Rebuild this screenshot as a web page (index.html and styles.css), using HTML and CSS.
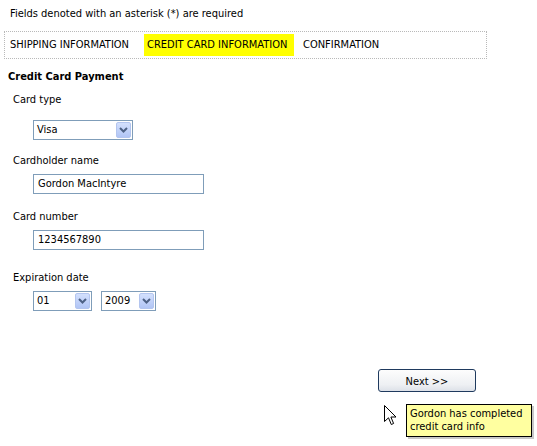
FILE: index.html
```html
<!DOCTYPE html>
<html>
<head>
<meta charset="utf-8">
<link rel="stylesheet" href="styles.css">
</head>
<body>
<p class="required">Fields denoted with an asterisk (*) are required</p>
<nav class="steps">
  <span class="step">SHIPPING INFORMATION</span>
  <span class="step current">CREDIT CARD INFORMATION</span>
  <span class="step">CONFIRMATION</span>
</nav>
<h2 class="section-title">Credit Card Payment</h2>
<div class="form">
  <div class="label label-first">Card type</div>
  <div class="control-row row-cardtype">
    <div class="select select-card"><span class="select-value">Visa</span><span class="select-btn"><svg width="9" height="6" viewBox="0 0 9 6"><path d="M1 1 L4.5 4.5 L8 1" fill="none" stroke="#4d6185" stroke-width="2"/></svg></span></div>
  </div>
  <div class="label label-gap">Cardholder name</div>
  <div class="control-row">
    <div class="input input-wide">Gordon MacIntyre</div>
  </div>
  <div class="label label-gap2">Card number</div>
  <div class="control-row">
    <div class="input input-wide">1234567890</div>
  </div>
  <div class="label label-gap3">Expiration date</div>
  <div class="control-row date-row">
    <div class="select select-month"><span class="select-value">01</span><span class="select-btn"><svg width="9" height="6" viewBox="0 0 9 6"><path d="M1 1 L4.5 4.5 L8 1" fill="none" stroke="#4d6185" stroke-width="2"/></svg></span></div>
    <div class="select select-year"><span class="select-value">2009</span><span class="select-btn"><svg width="9" height="6" viewBox="0 0 9 6"><path d="M1 1 L4.5 4.5 L8 1" fill="none" stroke="#4d6185" stroke-width="2"/></svg></span></div>
  </div>
</div>
<div class="actions">
  <button class="next-btn" type="button">Next &gt;&gt;</button>
  <svg class="cursor" width="13" height="22" viewBox="0 0 13 22"><path d="M0.5 0.5 L0.5 16.5 L4.5 12.8 L7.3 19.5 L9.6 18.5 L6.9 12 L12 12 Z" fill="#fff" stroke="#000" stroke-width="1" stroke-linejoin="miter"/></svg>
  <div class="tooltip">Gordon has completed<br>credit card info</div>
</div>
</body>
</html>
```
FILE: styles.css
```css
html, body {
  margin: 0;
  padding: 0;
  background: #fff;
}
body {
  font-family: "DejaVu Sans Condensed", "DejaVu Sans", sans-serif;
  font-size: 11px;
  color: #000;
  position: relative;
  width: 537px;
  height: 446px;
  overflow: hidden;
}
.required {
  margin: 0;
  padding: 7px 0 0 10px;
  line-height: 14px;
}
.steps {
  display: flex;
  margin: 10px 0 0 4px;
  width: 476px;
  border: 1px dotted #b9b9b9;
  padding: 2px 0 2px 5px;
}
.step {
  line-height: 22px;
}
.step.current {
  background: #ffff00;
  width: 150px;
  box-sizing: border-box;
  padding: 0 3px;
  margin: 0 9px 0 15px;
}
.section-title {
  margin: 11px 0 0 8px;
  font-size: 11px;
  font-weight: bold;
  line-height: 14px;
}
.form {
  padding-left: 13px;
}
.label {
  line-height: 14px;
}
.label-first { margin-top: 9px; }
.label-gap { margin-top: 14px; }
.label-gap2 { margin-top: 16px; }
.label-gap3 { margin-top: 21px; }
.control-row {
  display: flex;
  gap: 9px;
  padding-left: 20px;
  margin-top: 6px;
}
.row-cardtype { margin-top: 13px; }
.select {
  box-sizing: border-box;
  height: 20px;
  border: 1px solid #7f9db9;
  display: flex;
  align-items: center;
  justify-content: space-between;
  padding: 1px 1px 1px 3px;
  background: #fff;
}
.select-card { width: 100px; }
.select-month { width: 59px; }
.select-year { width: 55px; }
.select-value {
  line-height: 16px;
}
.select-btn {
  width: 15px;
  height: 16px;
  box-sizing: border-box;
  border: 1px solid #b3c5ef;
  border-radius: 2px;
  background: linear-gradient(#d3e0fd, #b1c5f5);
  display: flex;
  align-items: center;
  justify-content: center;
}
.input {
  box-sizing: border-box;
  height: 20px;
  border: 1px solid #7f9db9;
  padding: 0 4px;
  line-height: 18px;
}
.input-wide { width: 171px; }
.actions {
  position: relative;
  margin-top: 58px;
  padding-left: 378px;
  height: 78px;
}
.next-btn {
  display: block;
  box-sizing: border-box;
  width: 98px;
  height: 23px;
  border: 1px solid #1f3a5e;
  border-radius: 3px;
  background: linear-gradient(#fdfdfd, #eef0f3 70%, #dde1e8);
  font-family: inherit;
  font-size: 11px;
  color: #000;
  padding: 1px 0 0;
}
.cursor {
  position: absolute;
  left: 384px;
  top: 36px;
}
.tooltip {
  position: absolute;
  left: 406px;
  top: 35px;
  box-sizing: border-box;
  width: 126px;
  height: 33px;
  background: #ffffa0;
  border: 1px solid #000;
  padding: 2px 3px;
  line-height: 13px;
  box-shadow: 2px 2px 0 #c8c8c8;
}
```
